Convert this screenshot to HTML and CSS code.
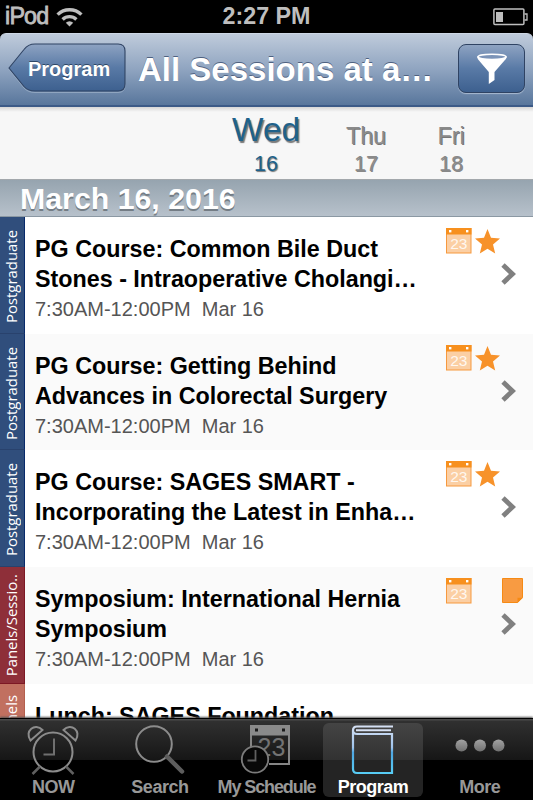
FILE: index.html
```
<!DOCTYPE html>
<html lang="en">
<head>
  <meta charset="UTF-8" />
  <meta name="viewport" content="width=device-width, initial-scale=1.0"/>
  <title>All Sessions</title>
  <link rel="stylesheet" href="styles.css">
</head>
<body>

  <!-- Shared icons -->
  <svg class="defs" width="0" height="0">
    <symbol id="calendar" viewBox="0 0 26 26">
      <rect x="0.5" y="0.5" width="24.500" height="24.500" fill="#fbcfa4" stroke="#f6993f"/>
      <rect width="25.500" height="6.5" fill="#f7901e"/>
      <rect x="3" y="2" width="2.4" height="2.4" fill="#fff"/>
      <rect x="20" y="2" width="2.4" height="2.4" fill="#fff"/>
      <text x="12.800" y="20.6" class="cal-day">23</text>
    </symbol>
    <symbol id="star" viewBox="0 0 25 25">
      <path d="M12.5 0L16 8.8L25 9.5L18 15.4L20.2 24.5L12.5 19.7L4.8 24.5L7 15.4L0 9.5L9 8.8Z" fill="#f7922a"/>
    </symbol>
    <symbol id="note" viewBox="0 0 21 25">
      <path d="M0.5 0.5H20.5V19.5L15.5 24.5H0.5Z" fill="#f89b42" stroke="#f68a14"/>
      <path d="M15.5 25V19.8H21Z" fill="#f68a14"/>
    </symbol>
    <symbol id="chevron" viewBox="0 0 15 22">
      <path d="M2 2L11.5 11L2 20" fill="none" stroke="#808080" stroke-width="4.8"/>
    </symbol>
  </svg>

  <div class="status-bar">
    <div class="carrier">
      <span>iPod</span>
      <svg width="27" height="20" viewBox="0 0 27 20">
        <g fill="none" stroke="#bebebe" stroke-width="3.4">
          <path d="M1.6 7.6A17 17 0 0 1 25.4 7.6"/>
          <path d="M6.6 12.4A10 10 0 0 1 20.4 12.4"/>
        </g>
        <path d="M13.5 19.5L9.8 15.8A5.3 5.3 0 0 1 17.2 15.8Z" fill="#bebebe"/>
      </svg>
    </div>
    <div class="clock">2:27 PM</div>
    <svg class="battery" width="35" height="18" viewBox="0 0 35 18">
      <rect x="0.9" y="1" width="30" height="15.6" rx="1" fill="none" stroke="#bebebe" stroke-width="1.5"/>
      <rect x="3" y="4" width="7" height="10" fill="#bebebe"/>
      <path d="M31.5 6H34V12H31.5" fill="none" stroke="#bebebe" stroke-width="1.3"/>
    </svg>
  </div>

  <header class="navbar">
    <a class="back">
      <svg width="119" height="51" viewBox="0 0 119 51">
        <defs>
          <linearGradient id="backFill" x1="0" y1="0" x2="0" y2="1">
            <stop offset="0" stop-color="#8ea3c2"/>
            <stop offset="0.5" stop-color="#597aa6"/>
            <stop offset="1" stop-color="#3d608f"/>
          </linearGradient>
        </defs>
        <path d="M1 26.2L16 7.5Q20 2 27 2H110Q117 2 117 9V42.5Q117 49.5 110 49.5H27Q20 49.5 16 45Z" fill="none" stroke="#a9bad0" stroke-opacity="0.6"/>
        <path d="M1 25L16 6.5Q20 1 27 1H110Q117 1 117 8V41Q117 48 110 48H27Q20 48 16 43.5Z" fill="url(#backFill)" stroke="#2f4363" stroke-width="1.1"/>
      </svg>
      <span>Program</span>
    </a>
    <h1>All Sessions at a…</h1>
    <button class="filter">
      <svg width="32" height="32" viewBox="0 0 32 32">
        <path d="M1 3.5Q1.500 6 3 7.500L12.800 19V31L18.500 27V19L28.500 7.500Q30.500 5.500 31 3.500Z" fill="#fff"/>
        <ellipse cx="16" cy="3.800" rx="14" ry="2.600" fill="#7c94b8" stroke="#fff" stroke-width="1.500"/>
      </svg>
    </button>
  </header>

  <nav class="days">
    <a class="day active"><span class="name">Wed</span><span class="num">16</span></a>
    <a class="day"><span class="name">Thu</span><span class="num">17</span></a>
    <a class="day"><span class="name">Fri</span><span class="num">18</span></a>
  </nav>

  <main class="sessions">
    <h2>March 16, 2016</h2>

    <div class="session">
      <div class="track"><span>Postgraduate</span></div>
      <div class="info">
        <div class="title">PG Course: Common Bile Duct<br>Stones - Intraoperative Cholangi…</div>
        <div class="time">7:30AM-12:00PM&nbsp; Mar 16</div>
      </div>
      <div class="marks">
        <div class="flags"><svg class="cal"><use href="#calendar"/></svg><svg class="star"><use href="#star"/></svg></div>
        <svg class="chevron"><use href="#chevron"/></svg>
      </div>
    </div>

    <div class="session">
      <div class="track"><span>Postgraduate</span></div>
      <div class="info">
        <div class="title">PG Course: Getting Behind<br>Advances in Colorectal Surgery</div>
        <div class="time">7:30AM-12:00PM&nbsp; Mar 16</div>
      </div>
      <div class="marks">
        <div class="flags"><svg class="cal"><use href="#calendar"/></svg><svg class="star"><use href="#star"/></svg></div>
        <svg class="chevron"><use href="#chevron"/></svg>
      </div>
    </div>

    <div class="session">
      <div class="track"><span>Postgraduate</span></div>
      <div class="info">
        <div class="title">PG Course: SAGES SMART -<br>Incorporating the Latest in Enha…</div>
        <div class="time">7:30AM-12:00PM&nbsp; Mar 16</div>
      </div>
      <div class="marks">
        <div class="flags"><svg class="cal"><use href="#calendar"/></svg><svg class="star"><use href="#star"/></svg></div>
        <svg class="chevron"><use href="#chevron"/></svg>
      </div>
    </div>

    <div class="session">
      <div class="track panels"><span>Panels/Sessio..</span></div>
      <div class="info">
        <div class="title">Symposium: International Hernia<br>Symposium</div>
        <div class="time">7:30AM-12:00PM&nbsp; Mar 16</div>
      </div>
      <div class="marks">
        <div class="flags"><svg class="cal"><use href="#calendar"/></svg><svg class="note"><use href="#note"/></svg></div>
        <svg class="chevron"><use href="#chevron"/></svg>
      </div>
    </div>

    <div class="session">
      <div class="track lunch"><span>Panels</span></div>
      <div class="info">
        <div class="title">Lunch: SAGES Foundation</div>
      </div>
    </div>
  </main>

  <footer class="tabbar">
    <a class="tab">
      <svg width="54" height="52" viewBox="0 0 54 52" fill="none" stroke="#8c8c8c" stroke-width="2">
        <circle cx="27" cy="27" r="19.500"/>
        <path d="M28 13.500V29.500H17.500" stroke="#707070"/>
        <path d="M4.500 15.500C-2 6 9 -3 16.500 5Z"/>
        <path d="M49.500 15.500C56 6 45 -3 37.500 5Z"/>
        <path d="M14 41.500L6.500 49M40 41.500L47.500 49" stroke="#606060" stroke-width="2.500"/>
      </svg>
      <span>NOW</span>
    </a>
    <a class="tab">
      <svg width="50" height="52" viewBox="0 0 50 52" fill="none">
        <circle cx="19" cy="19" r="17.800" stroke="#8c8c8c" stroke-width="2"/>
        <path d="M32 31.500L47 46.500" stroke="#5d5d5d" stroke-width="4.500" stroke-linecap="round"/>
      </svg>
      <span>Search</span>
    </a>
    <a class="tab schedule">
      <svg width="52" height="52" viewBox="0 0 52 52" fill="none">
        <path d="M11 22V1H49V39H29" stroke="#858585" stroke-width="2"/>
        <path d="M10 0H50V10.500H10Z" fill="#8a8a8a"/>
        <path d="M15 3.500H18V6.500H15ZM42 3.500H45V6.500H42Z" fill="#1a1a1a"/>
        <text x="31.500" y="31" class="tab-day">23</text>
        <circle cx="15" cy="34.500" r="13.200" fill="#080808" stroke="#7c7c7c" stroke-width="1.800"/>
        <path d="M15.500 25V35.500H7.500" stroke="#606060" stroke-width="1.800"/>
      </svg>
      <span>My Schedule</span>
    </a>
    <a class="tab selected">
      <svg width="44" height="52" viewBox="0 0 44 52" fill="none">
        <defs>
          <linearGradient id="bookStroke" gradientUnits="userSpaceOnUse" x1="0" y1="0" x2="0" y2="50">
            <stop offset="0" stop-color="#d7e1f3"/>
            <stop offset="0.450" stop-color="#a0c4ed"/>
            <stop offset="0.550" stop-color="#4fa8e4"/>
            <stop offset="1" stop-color="#58cff5"/>
          </linearGradient>
        </defs>
        <path d="M42 1.500H6Q2 1.500 2 5.500V44Q2 48 6 48H41V9H6Q2 9 2 5.500" stroke="url(#bookStroke)" stroke-width="2.200"/>
        <path d="M5 5.300H40" stroke="#d7e1f3" stroke-width="2"/>
      </svg>
      <span>Program</span>
    </a>
    <a class="tab">
      <svg width="50" height="52" viewBox="0 0 50 52">
        <defs>
          <linearGradient id="dotFill" x1="0" y1="0" x2="0" y2="1">
            <stop offset="0" stop-color="#a2a2a2"/>
            <stop offset="1" stop-color="#707070"/>
          </linearGradient>
        </defs>
        <g fill="url(#dotFill)">
          <circle cx="6.500" cy="20.500" r="6"/>
          <circle cx="25" cy="20.500" r="6"/>
          <circle cx="43.500" cy="20.500" r="6"/>
        </g>
      </svg>
      <span>More</span>
    </a>
  </footer>

</body>
</html>
```

FILE: styles.css
```
* {
  box-sizing: border-box;
}
body {
  margin: 0;
  width: 533px;
  height: 800px;
  overflow: hidden;
  display: flex;
  flex-direction: column;
  font-family: "Liberation Sans", Arial, sans-serif;
  background: #000;
}
svg {
  display: block;
  flex: none;
}
.defs {
  display: none;
}

/* Status bar */
.status-bar {
  height: 33px;
  flex: none;
  display: grid;
  grid-template-columns: 1fr auto 1fr;
  align-items: center;
  padding: 0 5px;
  color: #bebebe;
  font-size: 23.3px;
  font-weight: bold;
}
.carrier {
  display: flex;
  align-items: center;
  gap: 8px;
}
.carrier span {
  font-weight: normal;
  letter-spacing: -0.8px;
  -webkit-text-stroke: 0.8px #bebebe;
}
.battery {
  justify-self: end;
}

/* Navigation bar */
.navbar {
  height: 74px;
  flex: none;
  display: flex;
  align-items: center;
  padding: 0 8px 2px;
  background: linear-gradient(#bfcbdb, #8fa4c0 50%, #58769c);
  border-top: 1px solid #cdd7e4;
  border-bottom: 2px solid #3b5a87;
  border-radius: 6px 6px 0 0;
  color: #fff;
}
.back {
  display: grid;
  align-items: center;
}
.back svg,
.back span {
  grid-area: 1 / 1;
}
.back span {
  padding: 2px 0 0 20px;
  font-size: 20px;
  font-weight: bold;
  text-shadow: 0 -1px 0 #2f4766;
}
.navbar h1 {
  flex: 1;
  margin: 2px 0 0 11px;
  font-size: 33px;
  white-space: nowrap;
  text-shadow: 0 -1.5px 0 #4e6180;
}
.filter {
  width: 67px;
  height: 49px;
  padding: 0;
  display: flex;
  align-items: center;
  justify-content: center;
  border: 1px solid #2f4363;
  border-radius: 8px;
  background: linear-gradient(#8ea3c2, #597aa6 50%, #3d608f);
  box-shadow: 0 1px 1px #a9bad0;
}

/* Day picker */
.days {
  height: 72px;
  flex: none;
  display: grid;
  grid-template-columns: 72px 128px 42px;
  padding-left: 230px;
  background: linear-gradient(#d6d6d6, #f7f7f7 5px);
  color: #8a8a8a;
}
.day {
  display: flex;
  flex-direction: column;
  align-items: center;
  text-shadow: 1px 1px 0 #888;
}
.day .name {
  height: 44px;
  padding-top: 16px;
  font-size: 23.3px;
  line-height: 27px;
  text-shadow: 1px 1px 0 #777;
}
.day .num {
  font-size: 21.5px;
  line-height: 27px;
}
.day.active {
  color: #20618a;
  text-shadow: 1px 1px 1px #777;
}
.day.active .name {
  padding-top: 3px;
  font-size: 33.3px;
  line-height: 40px;
  text-shadow: 1.5px 1.5px 1px #777;
}

/* Session list */
.sessions {
  flex: 1;
  min-height: 0;
  overflow: hidden;
  background: #fff;
}
.sessions h2 {
  height: 38px;
  margin: 0;
  padding-left: 20px;
  border-top: 1px solid #a3a8ac;
  border-bottom: 1px solid #8b98a3;
  background: linear-gradient(#96a4af, #b7c1cb);
  color: #fff;
  font-size: 30.3px;
  line-height: 37px;
  text-shadow: 0 1.5px 0 #747d85;
}
.session {
  height: 116.67px;
  display: flex;
}
.session:nth-child(odd) {
  background: #fafafa;
}
.track {
  width: 25px;
  flex: none;
  display: flex;
  align-items: center;
  justify-content: center;
  padding: 3px 3px 0 0;
  overflow: hidden;
  background: #304e7c;
  border-right: 1px solid #08296a;
  border-bottom: 1px solid #29426d;
  color: #fff;
}
.track span {
  writing-mode: vertical-rl;
  transform: rotate(180deg);
  font-family: "Open Sans", "Noto Sans", sans-serif;
  font-size: 14.9px;
  line-height: 24px;
  white-space: nowrap;
}
.track.panels {
  padding-top: 0;
  background: #8e2f39;
  border-color: #7d1824;
}
.track.lunch {
  background: #c17060;
  border-color: #b45f4e;
}
.track.lunch span {
  margin-bottom: 50px;
}
.info {
  flex: 1;
  padding: 17px 0 0 10px;
  white-space: nowrap;
}
.title {
  color: #000;
  font-size: 23.3px;
  font-weight: bold;
  line-height: 30px;
}
.time {
  color: #555;
  font-size: 20px;
  line-height: 30px;
}
.marks {
  width: 87px;
  flex: none;
  padding-top: 11px;
}
.flags {
  display: flex;
  gap: 3px;
}
.cal {
  width: 26px;
  height: 26px;
}
.cal-day {
  fill: #fff;
  fill-opacity: 0.85;
  font-size: 15.5px;
  text-anchor: middle;
}
.star {
  width: 25px;
  height: 25px;
  margin-top: 1px;
}
.note {
  width: 21px;
  height: 25px;
  margin-left: 27px;
}
.chevron {
  width: 15px;
  height: 22px;
  margin: 9px 0 0 55px;
}

/* Tab bar */
.tabbar {
  height: 82px;
  flex: none;
  display: grid;
  grid-template-columns: repeat(5, minmax(0, 1fr));
  padding-top: 4px;
  border-top: 1px solid #000;
  background: linear-gradient(#4a4a4a 1px, #303030 2px, #161616 41px, #000 41px);
  box-shadow: 0 -1px 2px #555;
  position: relative;
}
.tab {
  height: 74px;
  margin: 0 3px;
  display: flex;
  flex-direction: column;
  align-items: center;
  padding-top: 2px;
  border-radius: 6px;
  color: #989898;
  font-size: 18px;
  font-weight: bold;
  letter-spacing: -0.5px;
  line-height: 21px;
  white-space: nowrap;
}
.tab.schedule {
  letter-spacing: -1.1px;
}
.tab.selected {
  background: linear-gradient(#444, #323232 37px, #242424 37px);
  color: #fff;
}
.tab-day {
  fill: #737373;
  font-size: 25px;
  font-weight: normal;
  letter-spacing: 0;
  text-anchor: middle;
}
```
